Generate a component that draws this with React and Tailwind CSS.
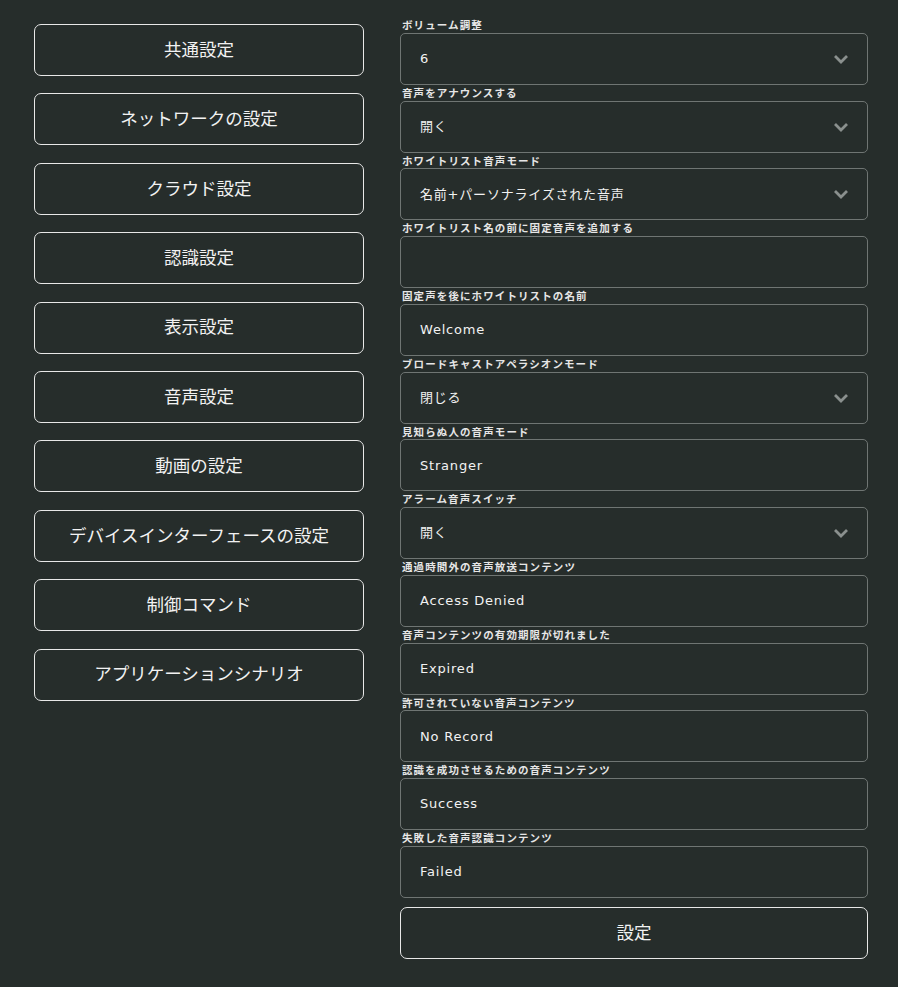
import React from 'react';

const menu = [
  '共通設定',
  'ネットワークの設定',
  'クラウド設定',
  '認識設定',
  '表示設定',
  '音声設定',
  '動画の設定',
  'デバイスインターフェースの設定',
  '制御コマンド',
  'アプリケーションシナリオ',
];

const fields = [
  { label: 'ボリューム調整', value: '6', select: true },
  { label: '音声をアナウンスする', value: '開く', select: true },
  { label: 'ホワイトリスト音声モード', value: '名前+パーソナライズされた音声', select: true },
  { label: 'ホワイトリスト名の前に固定音声を追加する', value: '' },
  { label: '固定声を後にホワイトリストの名前', value: 'Welcome' },
  { label: 'ブロードキャストアペラシオンモード', value: '閉じる', select: true },
  { label: '見知らぬ人の音声モード', value: 'Stranger' },
  { label: 'アラーム音声スイッチ', value: '開く', select: true },
  { label: '通過時間外の音声放送コンテンツ', value: 'Access Denied' },
  { label: '音声コンテンツの有効期限が切れました', value: 'Expired' },
  { label: '許可されていない音声コンテンツ', value: 'No Record' },
  { label: '認識を成功させるための音声コンテンツ', value: 'Success' },
  { label: '失敗した音声認識コンテンツ', value: 'Failed' },
];

function Chevron() {
  return (
    <svg width="16" height="10" viewBox="0 0 16 10" className="text-[#8a908e]">
      <path d="M2 2 L8 8 L14 2" fill="none" stroke="currentColor" strokeWidth="2.8" />
    </svg>
  );
}

export default function App() {
  return (
    <div className="min-h-[987px] w-full bg-[#262d2b] font-['DejaVu_Sans','Noto_Sans_CJK_JP',sans-serif] text-[#f2f2f2]">
      <div className="flex gap-[36px] pl-[34px] pt-[17px]">
        <div className="flex w-[330px] flex-col gap-[17.4px] pt-[7px]">
          {menu.map((m) => (
            <div
              key={m}
              className="flex h-[52px] items-center justify-center rounded-[7px] border border-[#e8e8e8] pb-[2px] font-['Noto_Sans_CJK_JP',sans-serif] text-[17.5px]"
            >
              {m}
            </div>
          ))}
        </div>
        <div className="flex w-[468px] flex-col">
          {fields.map((f) => (
            <div key={f.label} className="flex flex-col">
              <div className="h-[15.75px] pl-[2px] font-['Noto_Sans_CJK_JP',sans-serif] text-[10.5px] font-bold leading-[15px] tracking-[1.1px] text-[#e6e6e6]">
                {f.label}
              </div>
              <div className="flex h-[52px] items-center justify-between rounded-[5px] border border-[#6f7573] pl-[19px] pr-[18px]">
                <span className="text-[13px] tracking-[0.8px]">{f.value}</span>
                {f.select && <Chevron />}
              </div>
            </div>
          ))}
          <div className="mt-[9px] flex h-[52px] items-center justify-center rounded-[7px] border border-[#e8e8e8] pb-[2px] font-['Noto_Sans_CJK_JP',sans-serif] text-[17.5px]">
            設定
          </div>
        </div>
      </div>
    </div>
  );
}
